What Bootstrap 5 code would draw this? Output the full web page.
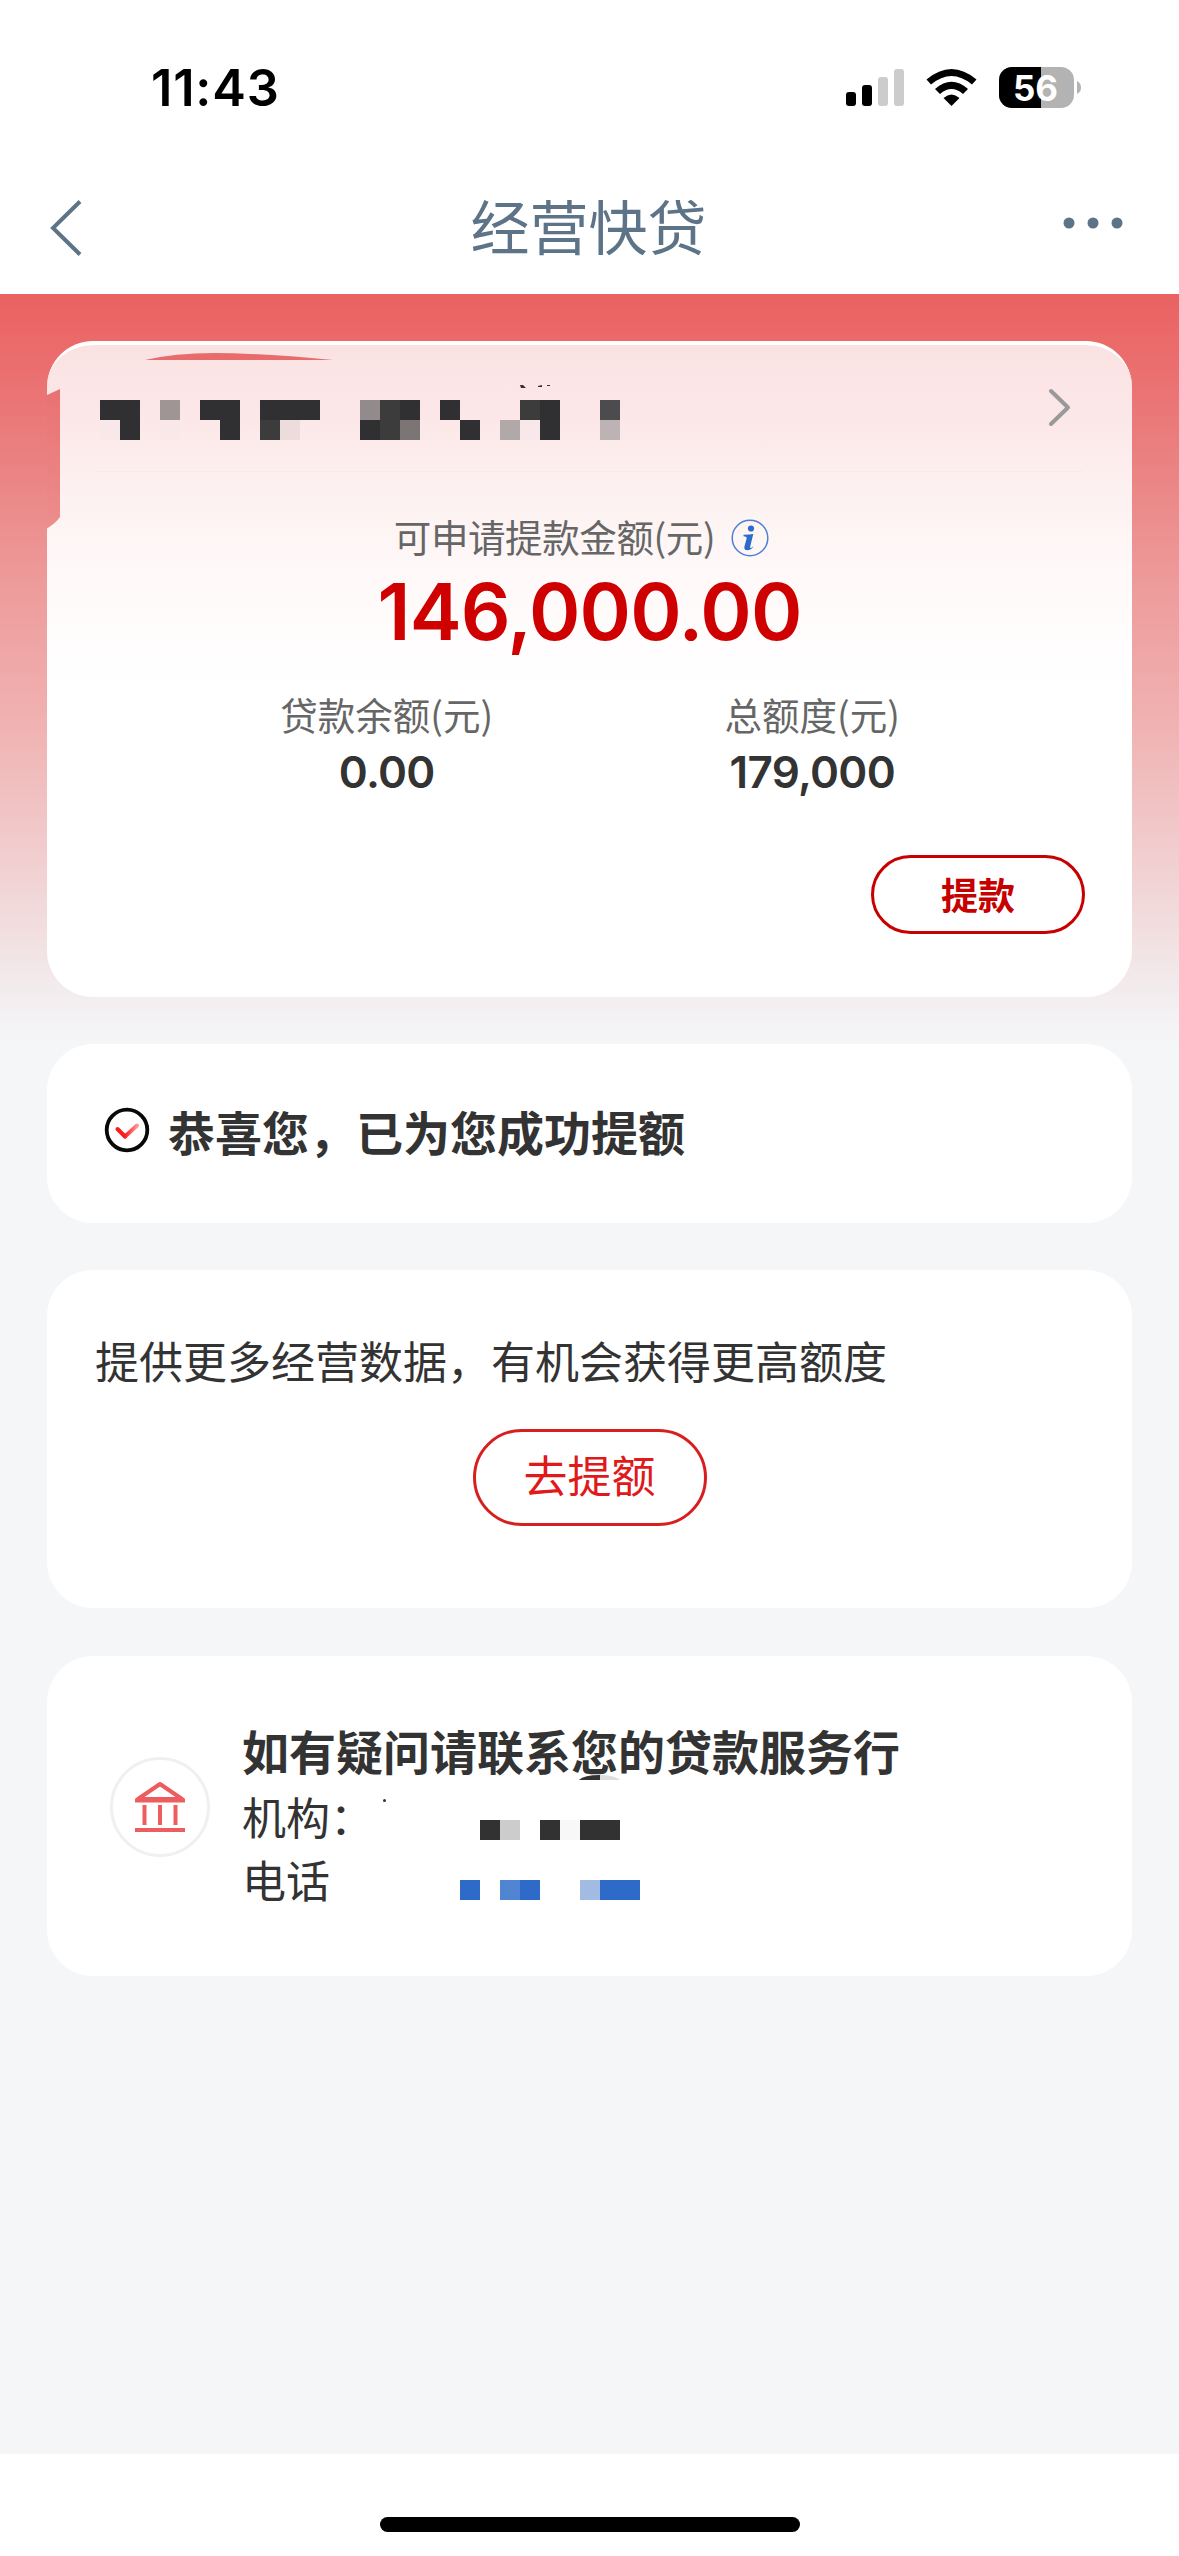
<!DOCTYPE html>
<html lang="zh-CN">
<head>
<meta charset="utf-8">
<meta name="viewport" content="width=device-width, initial-scale=1">
<title>经营快贷</title>
<link href="https://cdn.jsdelivr.net/npm/bootstrap@5.3.0/dist/css/bootstrap.min.css" rel="stylesheet">
<style>
body{font-family:"Inter","Noto Sans CJK SC",sans-serif;color:#333;background:#fff;width:1179px;height:2556px;overflow:hidden}
.cjk{font-family:"Noto Sans CJK SC",sans-serif}
svg{display:block;flex:none}
.statusbar{height:176px;padding:0 97px 0 151px}
.clock{font-size:50.5px;font-weight:600;color:#000;line-height:60px;margin-top:58px;letter-spacing:.8px}
.status-icons{margin-top:67px}
.titlebar{height:118px;padding:0 56px 0 49px;color:#5d7388}
.page-title{font-size:59px;line-height:80px;margin:9px 0 0 0;padding-left:31px}
.more-dots{margin-top:41px}
.content-area{height:2160px;padding:47px 47px 0;background:linear-gradient(#ea6262 0,#eb6c6c 60px,#ea7e7e 150px,#ee9b9b 290px,#f0b0b0 420px,#f1c9ca 540px,#f2dfe0 640px,#f3eff1 710px,#f5f6f8 750px) #f5f6f9}
.panel{border:0;border-radius:46px;background:#fff;--bs-card-border-width:0}
.loan{height:656px;border-top:4px solid #fff;background:linear-gradient(#fae2e2 0,#fce8e9 80px,#fdf0f0 140px,#fff8f8 220px,#fffdfd 300px,#fff 350px)}
.redact{position:absolute;left:0;top:-4px}
.account-row{height:127px;margin:0 48px;padding:0 12px 3px 0;border-bottom:1px solid #f5eaed}
.sub{font-size:37.5px;line-height:44px;color:#666}
.limit-label{margin-top:42px;padding-right:16px;letter-spacing:-.4px}
.info-icon{margin:4px 0 0 16px}
.amount{font-size:78px;font-weight:600;line-height:78px;color:#cf0000;margin-top:15px;letter-spacing:-.9px}
.stats{margin:41px 107px 0 127px}
.stat-value{font-size:44px;font-weight:600;line-height:50px;margin-top:11px;letter-spacing:-.7px}
.pill{border-radius:60px;border:3px solid #c70000;color:#c70000;padding:0;display:flex;align-items:center;justify-content:center}
.draw-row{padding:58px 47px 0}
.pill-draw{width:214px;height:79px;font-size:37px;font-weight:700}
.pill-raise{width:234px;height:97px;font-size:44px;border-color:#d71f1f;color:#e0191b;margin-top:41px;padding-bottom:7px}
.notice{height:179px;margin-top:47px;padding:0 57px}
.notice svg{margin-top:-7px}
.notice .heading-text{margin:-6px 0 0 18px}
.heading-text{font-size:47px;font-weight:700;line-height:56px;white-space:nowrap}
.raise{height:338px;margin-top:47px;padding-top:62px}
.copy{font-size:44px;line-height:56px}
.contact{height:320px;margin-top:48px;padding:66px 63px}
.seal{width:100px;height:100px;border:3px solid #f0f0f0;border-radius:50%;margin-top:35px}
.homebar{height:102px}
.homebar div{width:420px;height:15px;margin-top:63px;border-radius:8px;background:#000}
</style>
<script src="https://cdn.jsdelivr.net/npm/bootstrap@5.3.0/dist/js/bootstrap.bundle.min.js"></script>
</head>
<body>
<header>
  <div class="statusbar d-flex justify-content-between align-items-start">
    <div class="clock">11:43</div>
    <svg class="status-icons" width="236" height="42" viewBox="846 67 236 42">
      <rect x="846" y="92" width="10" height="14" rx="3"/><rect x="862" y="85" width="10" height="21" rx="3"/>
      <g fill="#ccc"><rect x="878" y="77" width="10" height="29" rx="3"/><rect x="894" y="69" width="10" height="37" rx="3"/></g>
      <path d="M926.5 79.500Q951.500 58.500 976.500 79.500L972 84.500Q951.500 67.500 931 84.500ZM935 89Q951.500 74.500 968 89L963 94Q951.500 84 940 94ZM943.500 98Q951.500 91 959.500 98L951.500 106Z"/>
      <rect x="999" y="67" width="75" height="41" rx="13" fill="#b3b3b3"/>
      <path d="M1041 67h-29a13 13 0 0 0-13 13v15a13 13 0 0 0 13 13h29z"/>
      <path d="M1077 81q4 2 4 6.500t-4 6.500z" fill="#b3b3b3"/>
      <text x="1035.500" y="100.500" text-anchor="middle" font-family="Inter,sans-serif" font-size="35" font-weight="700" fill="#fff">56</text>
    </svg>
  </div>
  <nav class="titlebar d-flex justify-content-between align-items-start">
    <svg class="mt-4" width="34" height="56" viewBox="0 0 34 56" fill="none" stroke="#5d7388" stroke-width="4"><path d="M31 1.500L4 28 31 54.500"/></svg>
    <h1 class="page-title cjk fw-normal">经营快贷</h1>
    <svg class="more-dots" width="60" height="12" viewBox="0 0 60 12" fill="#5d7388"><circle cx="6" cy="6" r="5.500"/><circle cx="30" cy="6" r="5.500"/><circle cx="54" cy="6" r="5.500"/></svg>
  </nav>
</header>
<main class="content-area">
  <section class="panel card loan">
    <svg class="redact" width="600" height="200" viewBox="47 341 600 200">
      <defs><linearGradient id="edge" x1="0" y1="0" x2="0" y2="1"><stop stop-color="#e97171"/><stop offset="1" stop-color="#ec8e8e"/></linearGradient></defs>
      <path d="M46 395.500L60 389V517Q56 523 46 529Z" fill="url(#edge)"/>
      <path d="M145 360Q175 353 214 353Q260 353 333 360Z" fill="#e86c6c"/>
      <path d="M520 385h3l3 3h-5zM538 386l4-1v2h-4zM547 385h3v1h-3z" fill="#333"/>
      <g shape-rendering="crispEdges">
      <path fill="#303032" d="M100 400h40v40h-20v-20h-20zM200 400h40v40h-20v-20h-20zM260 400h60v20h-60zM400 400h20v20h-20zM360 420h20v20h-20zM440 400h20v20h-20zM460 420h20v20h-20zM540 400h20v40h-20z"/>
      <path fill="#3d3c3d" d="M260 420h20v20h-20zM380 400h20v40h-20zM520 400h20v20h-20z"/>
      <path fill="#9e9594" d="M160 400h20v20h-20z"/><path fill="#928a8b" d="M360 400h20v20h-20z"/><path fill="#7c7576" d="M400 420h20v20h-20z"/>
      <path fill="#b1a8a9" d="M500 420h20v20h-20z"/><path fill="#4c4b4d" d="M600 400h20v20h-20z"/><path fill="#beb3b4" d="M600 420h20v20h-20z"/>
      <path fill="#ecdcdc" d="M280 420h20v20h-20z"/><path fill="#f8e8e9" d="M100 420h20v20h-20zM160 420h20v20h-20zM520 420h20v20h-20z"/>
      </g>
    </svg>
    <div class="account-row d-flex justify-content-end align-items-center">
      <svg width="24" height="40" viewBox="0 0 24 40" fill="none" stroke="#999" stroke-width="4" stroke-linecap="round" stroke-linejoin="round"><path d="M3 4L20 20.500 3 37"/></svg>
    </div>
    <div class="limit-label d-flex justify-content-center align-items-center cjk sub">
      <span>可申请提款金额(元)</span>
      <svg class="info-icon" width="38" height="38" viewBox="0 0 38 38"><circle cx="19" cy="19" r="17.800" fill="none" stroke="#4a80d6" stroke-width="1.500"/><circle cx="20" cy="9.500" r="3.100" fill="#2e6bc9"/><path d="M12.500 15.800Q18 15.800 22.300 15L19.200 27.500Q18.800 29.300 20 29Q21.300 28.600 22.800 27.300Q20 31.300 16.300 31.300Q12.500 31.300 13.500 27.300L15.600 19.500Q16.200 17.500 12.500 17.300Z" fill="#2e6bc9"/></svg>
    </div>
    <div class="amount text-center">146,000.00</div>
    <div class="stats row g-0 text-center">
      <div class="col-6"><div class="sub cjk">贷款余额(元)</div><div class="stat-value">0.00</div></div>
      <div class="col-6"><div class="sub cjk">总额度(元)</div><div class="stat-value">179,000</div></div>
    </div>
    <div class="draw-row d-flex justify-content-end"><button class="btn pill pill-draw cjk">提款</button></div>
  </section>
  <section class="panel card notice flex-row align-items-center">
    <svg width="46" height="46" viewBox="0 0 46 46" fill="none"><defs><linearGradient id="tick"><stop stop-color="#fb1c20"/><stop offset="1" stop-color="#ff9292"/></linearGradient></defs><circle cx="23" cy="23" r="20.300" stroke="#080808" stroke-width="3.800"/><path d="M13.500 22L21 29.500" stroke="#fb1c20" stroke-width="4" stroke-linecap="round"/><path d="M21 29.500L33 18.500" stroke="url(#tick)" stroke-width="4" stroke-linecap="round"/></svg>
    <div class="heading-text cjk">恭喜您，已为您成功提额</div>
  </section>
  <section class="panel card raise">
    <div class="copy cjk ps-5">提供更多经营数据，有机会获得更高额度</div>
    <button class="btn pill pill-raise cjk mx-auto">去提额</button>
  </section>
  <section class="panel card contact flex-row align-items-start">
    <div class="seal d-flex justify-content-center align-items-center">
      <svg width="50" height="52" viewBox="0 0 50 52" fill="none" stroke="#ed5c5e" stroke-width="4"><path d="M3 18L25 3 47 18Z" stroke-linejoin="round"/><path d="M0 19.500H50M0 49H50"/><path d="M9.500 24V44M25 24V44M40.500 24V44"/></svg>
    </div>
    <div style="margin-left:32px">
      <div class="heading-text cjk">如有疑问请联系您的贷款服务行</div>
      <div class="copy cjk" style="margin-top:10px">机构：</div>
      <div class="copy cjk" style="margin-top:7px">电话</div>
    </div>
    <svg class="position-absolute top-0 start-0" width="620" height="260" viewBox="47 1656 620 260">
      <path d="M579 1780Q584 1775 600 1775V1780Z" fill="#333"/><path d="M600 1775Q614 1775 620 1780H600Z" fill="#ddd"/><circle cx="384.500" cy="1800.500" r="1.500" fill="#333"/>
      <g shape-rendering="crispEdges"><path fill="#323232" d="M480 1820h20v20h-20zM540 1820h20v20h-20zM580 1820h40v20h-40z"/><path fill="#ccc" d="M500 1820h20v20h-20z"/><path fill="#f8f8f8" d="M560 1820h20v20h-20z"/>
      <path fill="#2e6bc9" d="M460 1880h20v20h-20zM520 1880h20v20h-20zM600 1880h40v20h-40z"/><path fill="#5085d2" d="M500 1880h20v20h-20z"/><path fill="#a1bbe3" d="M580 1880h20v20h-20z"/></g>
    </svg>
  </section>
</main>
<footer class="homebar d-flex justify-content-center"><div></div></footer>
</body>
</html>
